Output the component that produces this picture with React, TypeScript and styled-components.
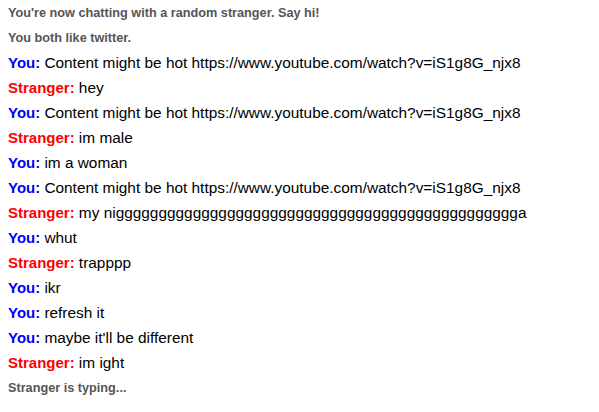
import React from "react";
import styled, { createGlobalStyle } from "styled-components";

const Global = createGlobalStyle`
  html, body { margin: 0; padding: 0; background: #fff; }
  body { font-family: "Liberation Sans", Arial, sans-serif; }
`;

const Log = styled.div`
  display: flex;
  flex-direction: column;
  padding: 0 8px;
`;

const Item = styled.div`
  height: 25px;
  display: flex;
  align-items: center;
  white-space: nowrap;
`;

const Status = styled.span`
  font-size: 12.7px;
  font-weight: bold;
  color: #555;
`;

const Msg = styled.span`
  font-size: 15px;
  color: #000;
`;

const Body = styled.span`
  font-size: 15.4px;
`;

const Who = styled.strong<{ $you: boolean }>`
  font-weight: bold;
  color: ${(p) => (p.$you ? "#0000ff" : "#ff0000")};
`;

type Entry = { k: "s"; t: string } | { k: "m"; you: boolean; t: string };

const url = "Content might be hot https://www.youtube.com/watch?v=iS1g8G_njx8";
const entries: Entry[] = [
  { k: "s", t: "You're now chatting with a random stranger. Say hi!" },
  { k: "s", t: "You both like twitter." },
  { k: "m", you: true, t: url },
  { k: "m", you: false, t: "hey" },
  { k: "m", you: true, t: url },
  { k: "m", you: false, t: "im male" },
  { k: "m", you: true, t: "im a woman" },
  { k: "m", you: true, t: url },
  { k: "m", you: false, t: "my niggggggggggggggggggggggggggggggggggggggggggggggga" },
  { k: "m", you: true, t: "whut" },
  { k: "m", you: false, t: "trapppp" },
  { k: "m", you: true, t: "ikr" },
  { k: "m", you: true, t: "refresh it" },
  { k: "m", you: true, t: "maybe it'll be different" },
  { k: "m", you: false, t: "im ight" },
  { k: "s", t: "Stranger is typing..." },
];

export default function App() {
  return (
    <>
      <Global />
      <Log>
        {entries.map((e, i) => (
          <Item key={i}>
            {e.k === "s" ? (
              <Status>{e.t}</Status>
            ) : (
              <Msg>
                <Who $you={e.you}>{e.you ? "You:" : "Stranger:"}</Who> <Body>{e.t}</Body>
              </Msg>
            )}
          </Item>
        ))}
      </Log>
    </>
  );
}
